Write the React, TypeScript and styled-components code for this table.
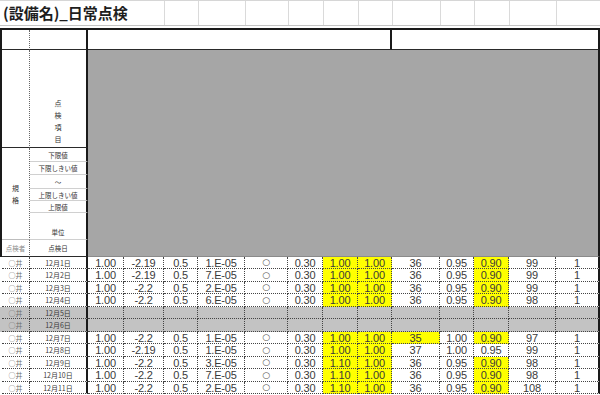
import styled, { createGlobalStyle } from "styled-components";

const BODY_COLS = "28px 58px 36px 40px 34px 47px 43px 35px 35px 34px 48px 34px 35px 47px 44px";
const TITLE_COLS = "164px 34px 47px 43px 35px 35px 34px 48px 34px 35px 47px 43px";
const ROW_PITCH = 12.45;

const GlobalStyle = createGlobalStyle`
  html, body {
    margin: 0;
    padding: 0;
    background: #fff;
  }
  body {
    width: 600px;
    height: 395px;
    overflow: hidden;
    font-family: "Liberation Sans", "Noto Sans CJK JP", sans-serif;
    color: #333;
  }
`;

type Rec = {
  who: string;
  date: string;
  vals?: string[];
};

const records: Rec[] = [
  { who: "○井", date: "12月1日", vals: ["1.00", "-2.19", "0.5", "1.E-05", "○", "0.30", "*1.00", "*1.00", "36", "0.95", "*0.90", "99", "1"] },
  { who: "○井", date: "12月2日", vals: ["1.00", "-2.19", "0.5", "7.E-05", "○", "0.30", "*1.00", "*1.00", "36", "0.95", "*0.90", "99", "1"] },
  { who: "○井", date: "12月3日", vals: ["1.00", "-2.2", "0.5", "2.E-05", "○", "0.30", "*1.00", "*1.00", "36", "0.95", "*0.90", "99", "1"] },
  { who: "○井", date: "12月4日", vals: ["1.00", "-2.2", "0.5", "6.E-05", "○", "0.30", "*1.00", "*1.00", "36", "0.95", "*0.90", "98", "1"] },
  { who: "○井", date: "12月5日" },
  { who: "○井", date: "12月6日" },
  { who: "○井", date: "12月7日", vals: ["1.00", "-2.2", "0.5", "1.E-05", "○", "0.30", "*1.00", "*1.00", "*35", "1.00", "*0.90", "97", "1"] },
  { who: "○井", date: "12月8日", vals: ["1.00", "-2.19", "0.5", "1.E-05", "○", "0.30", "*1.00", "*1.00", "37", "1.00", "0.95", "99", "1"] },
  { who: "○井", date: "12月9日", vals: ["1.00", "-2.2", "0.5", "3.E-05", "○", "0.30", "*1.10", "*1.00", "36", "0.95", "*0.90", "98", "1"] },
  { who: "○井", date: "12月10日", vals: ["1.00", "-2.2", "0.5", "7.E-05", "○", "0.30", "*1.10", "*1.00", "36", "0.95", "*0.90", "98", "1"] },
  { who: "○井", date: "12月11日", vals: ["1.00", "-2.2", "0.5", "2.E-05", "○", "0.30", "*1.10", "*1.00", "36", "0.95", "*0.90", "108", "1"] },
];

const limits = ["下限値", "下限しきい値", "〜", "上限しきい値", "上限値"];

export default function App() {
  return (
    <>
      <GlobalStyle />
      <TitleRow>
        <Title>(設備名)_日常点検</Title>
        {Array.from({ length: 11 }).map((_, i) => (
          <TitleCell key={i} />
        ))}
      </TitleRow>

      <Sheet>
        <Header>
          <HeadCell $col="1" $row="1" />
          <HeadCell $col="2" $row="1" $thick />
          <HeadCell $col="3" $row="1" $thick />
          <HeadCell $col="4" $row="1" $thick />

          <HeadCell $col="1" $row="2" $line="dark" />
          <ItemCell $col="2" $row="2">
            <Stack>
              <span>点</span>
              <span>検</span>
              <span>項</span>
              <span>目</span>
            </Stack>
          </ItemCell>

          <SpecCell $col="1" $row="3 / 9" $line="soft">
            <Stack>
              <span>規</span>
              <span>格</span>
            </Stack>
          </SpecCell>
          {limits.map((l, i) => (
            <LabelCell key={l} $col="2" $row={String(i + 3)}>
              {l}
            </LabelCell>
          ))}
          <LabelCell $col="2" $row="8" $bottom>
            単位
          </LabelCell>
          <LabelCell $col="1" $row="9" $muted $line="dark">
            点検者
          </LabelCell>
          <LabelCell $col="2" $row="9" $line="dark">
            点検日
          </LabelCell>

          <GrayBlock />
        </Header>

        {records.map((r, idx) => {
          // whole-pixel rows so the dotted hairlines stay crisp
          const h = Math.round((idx + 1) * ROW_PITCH) - Math.round(idx * ROW_PITCH);
          return (
            <Row key={r.date} $off={!r.vals} style={{ height: h }}>
              <Who>{r.who}</Who>
              <DateCell>{r.date}</DateCell>
              {(r.vals ?? Array.from({ length: 13 }, () => "")).map((v, i) => {
                const mark = v.startsWith("*");
                const text = mark ? v.slice(1) : v;
                return (
                  <Val key={i} $mark={mark} $last={i === 12}>
                    {text === "○" ? <Ok>○</Ok> : text}
                  </Val>
                );
              })}
            </Row>
          );
        })}
      </Sheet>
    </>
  );
}

const TitleRow = styled.div`
  display: grid;
  grid-template-columns: ${TITLE_COLS};
  height: 26px;
  box-sizing: border-box;
  border-top: 1px solid #d6d6d6;
  border-bottom: 1px solid #c4c4c4;
`;

const Title = styled.div`
  font-family: "Noto Sans CJK JP", sans-serif;
  font-weight: 700;
  font-size: 15px;
  line-height: 24px;
  padding-left: 3px;
  color: #1e1e1e;
  white-space: nowrap;
`;

const TitleCell = styled.div`
  border-left: 1px solid #dadada;
`;

const Sheet = styled.div`
  margin-top: 2px;
  width: 600px;
  box-sizing: border-box;
  border-top: 2px solid #1a1a1a;
  border-left: 2px solid #1a1a1a;
`;

const Header = styled.div`
  display: grid;
  grid-template-columns: 28px 58px 304px 208px;
  grid-template-rows: 20px 98px 14px 13px 14px 12px 12px 27px 17px;
`;

type Place = { $col: string; $row: string; $line?: "dark" | "soft"; $thick?: boolean };

const HeadCell = styled.div<Place>`
  grid-column: ${(p) => p.$col};
  grid-row: ${(p) => p.$row};
  box-sizing: border-box;
  background: #fff;
  border-right: ${(p) => (p.$thick ? "2px solid #1a1a1a" : "1px dotted #666")};
  border-bottom: 1px solid ${(p) => (p.$line === "soft" ? "#bdbdbd" : "#2a2a2a")};
`;

const ItemCell = styled(HeadCell)`
  border-right: 2px solid #1a1a1a;
  border-bottom: 1px solid #2a2a2a;
  display: flex;
  align-items: flex-end;
  justify-content: center;
  padding-bottom: 2px;
`;

const SpecCell = styled(HeadCell)`
  display: flex;
  align-items: center;
  justify-content: center;
`;

const Stack = styled.div`
  display: flex;
  flex-direction: column;
  align-items: center;
  font-family: "Noto Sans CJK JP", sans-serif;
  font-size: 7px;
  line-height: 12px;
  color: #333;
`;

const LabelCell = styled.div<Place & { $bottom?: boolean; $muted?: boolean }>`
  grid-column: ${(p) => p.$col};
  grid-row: ${(p) => p.$row};
  box-sizing: border-box;
  display: flex;
  justify-content: center;
  align-items: ${(p) => (p.$bottom ? "flex-end" : "center")};
  padding-bottom: ${(p) => (p.$bottom ? "2px" : "0")};
  font-family: "Noto Sans CJK JP", sans-serif;
  font-size: 6.5px;
  color: ${(p) => (p.$muted ? "#8a8a8a" : "#333")};
  white-space: nowrap;
  border-right: ${(p) => (p.$col === "2" ? "2px solid #1a1a1a" : "1px dotted #666")};
  border-bottom: 1px solid ${(p) => (p.$line === "dark" ? "#2a2a2a" : "#d0d0d0")};
`;

const GrayBlock = styled.div`
  grid-column: 3 / 5;
  grid-row: 2 / 10;
  background: #a6a6a6;
  border-right: 2px solid #1a1a1a;
  border-bottom: 1px solid #8a8a8a;
`;

const Row = styled.div<{ $off: boolean }>`
  display: grid;
  grid-template-columns: ${BODY_COLS};
  margin-left: -2px;
  padding-left: 2px;
  background: ${(p) => (p.$off ? "#c3c3c3" : "#fff")};
  & > div {
    box-sizing: border-box;
    border-bottom: 1px dotted #444;
    display: flex;
    align-items: center;
    justify-content: center;
    white-space: nowrap;
    overflow: hidden;
  }
`;

const Who = styled.div`
  border-right: 1px dotted #444;
  font-family: "Noto Sans CJK JP", sans-serif;
  font-size: 7px;
  color: #707070;
`;

const DateCell = styled.div`
  border-right: 2px solid #1a1a1a;
  font-family: "Noto Sans CJK JP", sans-serif;
  font-size: 7px;
  color: #3a3a3a;
`;

const Val = styled.div<{ $mark: boolean; $last: boolean }>`
  border-right: ${(p) => (p.$last ? "2px solid #1a1a1a" : "1px dotted #444")};
  background: ${(p) => (p.$mark ? "#ffff00" : "transparent")};
  font-size: 11px;
  letter-spacing: -0.2px;
  color: #3a3a3a;
`;

const Ok = styled.span`
  font-family: "DejaVu Sans", sans-serif;
  font-size: 9px;
  line-height: 9px;
  color: #555;
`;
